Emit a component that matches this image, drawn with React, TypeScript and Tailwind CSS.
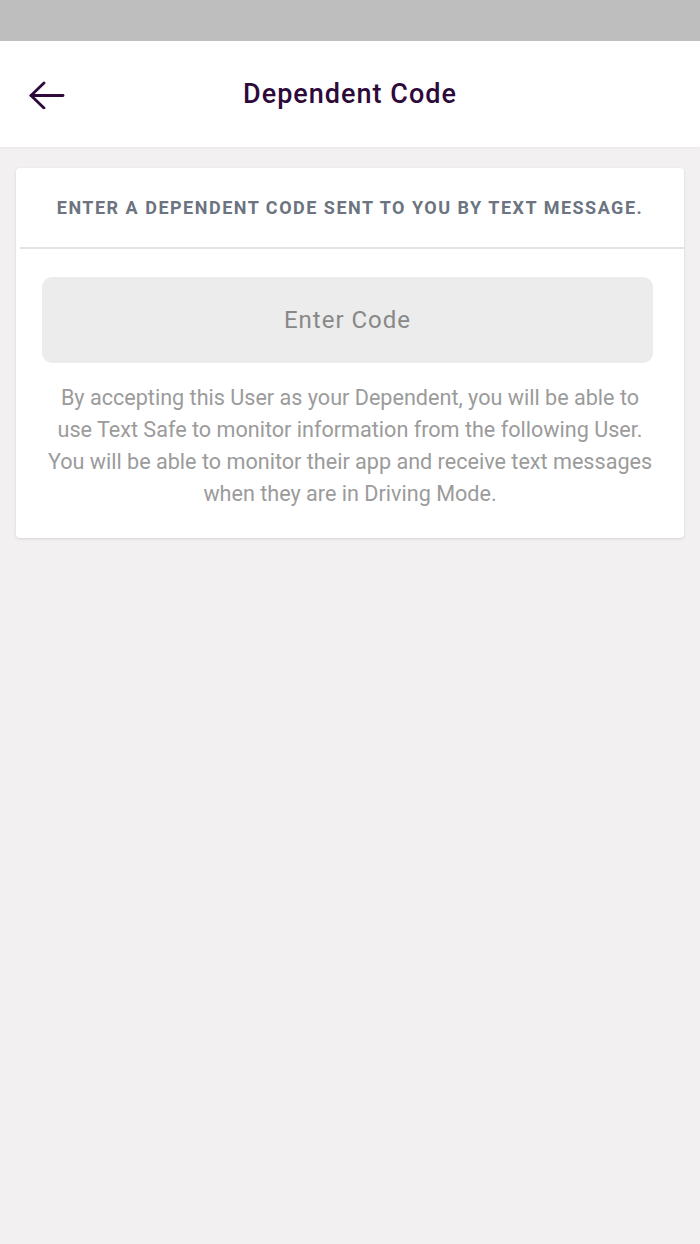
export default function App() {
    return (
        <div className="min-h-[1244px] bg-[#f2f0f1] font-['Roboto',sans-serif] flex flex-col">
            {/* status bar */}
            <div className="h-[41px] bg-[#bebebe]" />

            {/* header */}
            <div className="h-[106px] bg-white flex items-center relative shadow-[0_1px_2px_rgba(0,0,0,0.04)]">
                <button className="absolute left-[29px] top-[40px] text-[#2d0a3a]">
                    <svg width="36" height="28" viewBox="0 0 36 28" fill="none" stroke="currentColor" strokeWidth="2.8" strokeLinecap="round" strokeLinejoin="round">
                        <path d="M2 14.5H34" />
                        <path d="M15 2L2 14.5L15 27" />
                    </svg>
                </button>
                <h1 className="w-full text-center text-[27px] tracking-[1px] font-medium text-[#2d0a3a]">Dependent Code</h1>
            </div>

            {/* card */}
            <div className="mx-[16px] mt-[21px] bg-white rounded-[4px] shadow-[0_1px_3px_rgba(0,0,0,0.12)]">
                <div className="h-[79px] flex items-center justify-center">
                    <p className="text-[18px] font-bold uppercase tracking-[1.5px] text-[#6b7480]">
                        Enter a dependent code sent to you by text message.
                    </p>
                </div>
                <div className="ml-[4px] h-[2px] bg-[#e4e4e4]" />
                <div className="px-[24px] pt-[28px] pb-[28px]">
                    <div className="pl-[2px] pr-[7px]">
                        <input
                            className="w-full h-[86px] rounded-[10px] bg-[#ececec] text-center text-[24px] tracking-[1px] text-[#555] placeholder:text-[#888] outline-none"
                            placeholder="Enter Code"
                        />
                    </div>
                    <p className="mt-[19px] text-center text-[21.6px] leading-[32px] text-[#9b9b9b] whitespace-nowrap">
                        By accepting this User as your Dependent, you will be able to<br />
                        use Text Safe to monitor information from the following User.<br />
                        You will be able to monitor their app and receive text messages<br />
                        when they are in Driving Mode.
                    </p>
                </div>
            </div>
        </div>
    );
}
